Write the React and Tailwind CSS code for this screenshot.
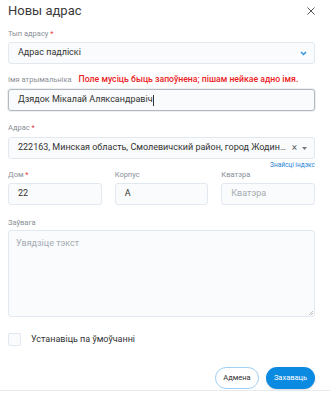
import React from "react";

const Label = ({ children, required }) => (
  <div className="h-[10px] text-[7.5px] leading-[10px] text-[#8a8f96] whitespace-nowrap">
    {children}
    {required && <span className="text-[#e5393a]"> *</span>}
  </div>
);

const boxCls =
  "h-[22px] w-full rounded-[3px] border border-[#e2e8ef] bg-[#fafbfc] px-[9px] text-[9px] text-[#333] flex items-center";

export default function App() {
  return (
    <div
      className="w-[330px] h-[396px] bg-white overflow-hidden flex flex-col"
      style={{ fontFamily: "Roboto, 'Noto Sans', sans-serif" }}
    >
      {/* Header */}
      <div className="flex items-center justify-between pl-[8px] pr-[15px] h-[22px]">
        <h1 className="text-[13px] text-[#3a3a3a]">Новы адрас</h1>
        <svg width="8" height="8" viewBox="0 0 8 8" className="text-[#555]">
          <path d="M0.5 0.5L7.5 7.5M7.5 0.5L0.5 7.5" stroke="currentColor" strokeWidth="1" />
        </svg>
      </div>

      <div className="pl-[8px] pr-[15px] flex flex-col">
        {/* Type */}
        <div className="mt-[7px]">
          <Label required>Тып адрасу</Label>
        </div>
        <div className={boxCls + " mt-[3px] justify-between pr-[7px]"}>
          <span>Адрас падлiскi</span>
          <svg width="7" height="5" viewBox="0 0 7 5" className="text-[#2f95e0]">
            <path d="M1 1L3.5 3.5L6 1" fill="none" stroke="currentColor" strokeWidth="1.5" />
          </svg>
        </div>

        {/* Name */}
        <div className="mt-[10px] h-[12px] flex items-center">
          <Label>Імя атрымальніка</Label>
          <span className="ml-[7px] text-[8.7px] font-medium leading-[12px] text-[#ea1c24] whitespace-nowrap -mt-[2px]">
            Поле мусіць быць запоўнена; пішам нейкае адно імя.
          </span>
        </div>
        <div className="mt-[3px] h-[22px] w-full rounded-[3px] border border-[#b3b9c0] bg-[#fafbfc] px-[9px] text-[9px] text-[#333] flex items-center shadow-[0_0_0_1px_#eceef0]">
          <span>Дзядок Мікалай Аляксандравіч</span>
          <span className="inline-block w-px h-[11px] bg-[#333]" />
        </div>

        {/* Address */}
        <div className="mt-[12px]">
          <Label required>Адрас</Label>
        </div>
        <div className={boxCls + " mt-[4px] pr-[7px]"}>
          <span className="flex-1 min-w-0 truncate">
            222163, Минская область, Смолевичский район, город Жодино, улица Ленина
          </span>
          <span className="ml-[3px] text-[#666] text-[10px] leading-none">×</span>
          <svg width="5" height="3" viewBox="0 0 5 3" className="ml-[5px] text-[#777]">
            <path d="M0 0H5L2.5 3Z" fill="currentColor" />
          </svg>
        </div>
        <div className="text-right text-[6.5px] leading-[8px] text-[#1f82d6] mt-[2px]">
          Знайсці індэкс
        </div>

        {/* House row */}
        <div className="grid grid-cols-3 gap-[13px] mt-[1px]">
          <div>
            <Label required>Дом</Label>
            <div className={boxCls + " mt-[3px]"}>22</div>
          </div>
          <div>
            <Label>Корпус</Label>
            <div className={boxCls + " mt-[3px]"}>А</div>
          </div>
          <div>
            <Label>Кватэра</Label>
            <div className={boxCls + " mt-[3px] text-[#a5abb2]"}>Кватэра</div>
          </div>
        </div>

        {/* Note */}
        <div className="mt-[13px]">
          <Label>Заўвага</Label>
        </div>
        <div className="relative mt-[2px] h-[87px] w-full rounded-[3px] border border-[#e2e8ef] bg-[#fafbfc] px-[7px] pt-[6px] text-[9px] leading-[12px] text-[#a5abb2]">
          Увядзіце тэкст
          <svg width="4" height="4" viewBox="0 0 4 4" className="absolute right-[1px] bottom-[1px] text-[#999]">
            <path d="M4 0L0 4M4 2L2 4" stroke="currentColor" strokeWidth="0.6" />
          </svg>
        </div>

        {/* Checkbox */}
        <div className="mt-[16px] flex items-center">
          <div className="w-[13px] h-[13px] rounded-[2px] border border-[#e2e8ef] bg-[#fafbfc]" />
          <span className="ml-[10px] text-[9px] text-[#333]">Устанавіць па ўмоўчанні</span>
        </div>

        {/* Buttons */}
        <div className="mt-[20px] flex justify-end gap-[7px]">
          <button className="h-[22px] w-[44px] rounded-full border border-[#9fd0f5] bg-white text-[7.5px] text-[#333]">
            Адмена
          </button>
          <button className="h-[22px] w-[49px] rounded-full bg-[#0b8ae2] text-[7.5px] text-white shadow-[0_1px_2px_rgba(0,0,0,0.15)]">
            Захаваць
          </button>
        </div>
      </div>
      <div className="mt-[1px] h-px bg-[#e8ebee] w-full" />
    </div>
  );
}
